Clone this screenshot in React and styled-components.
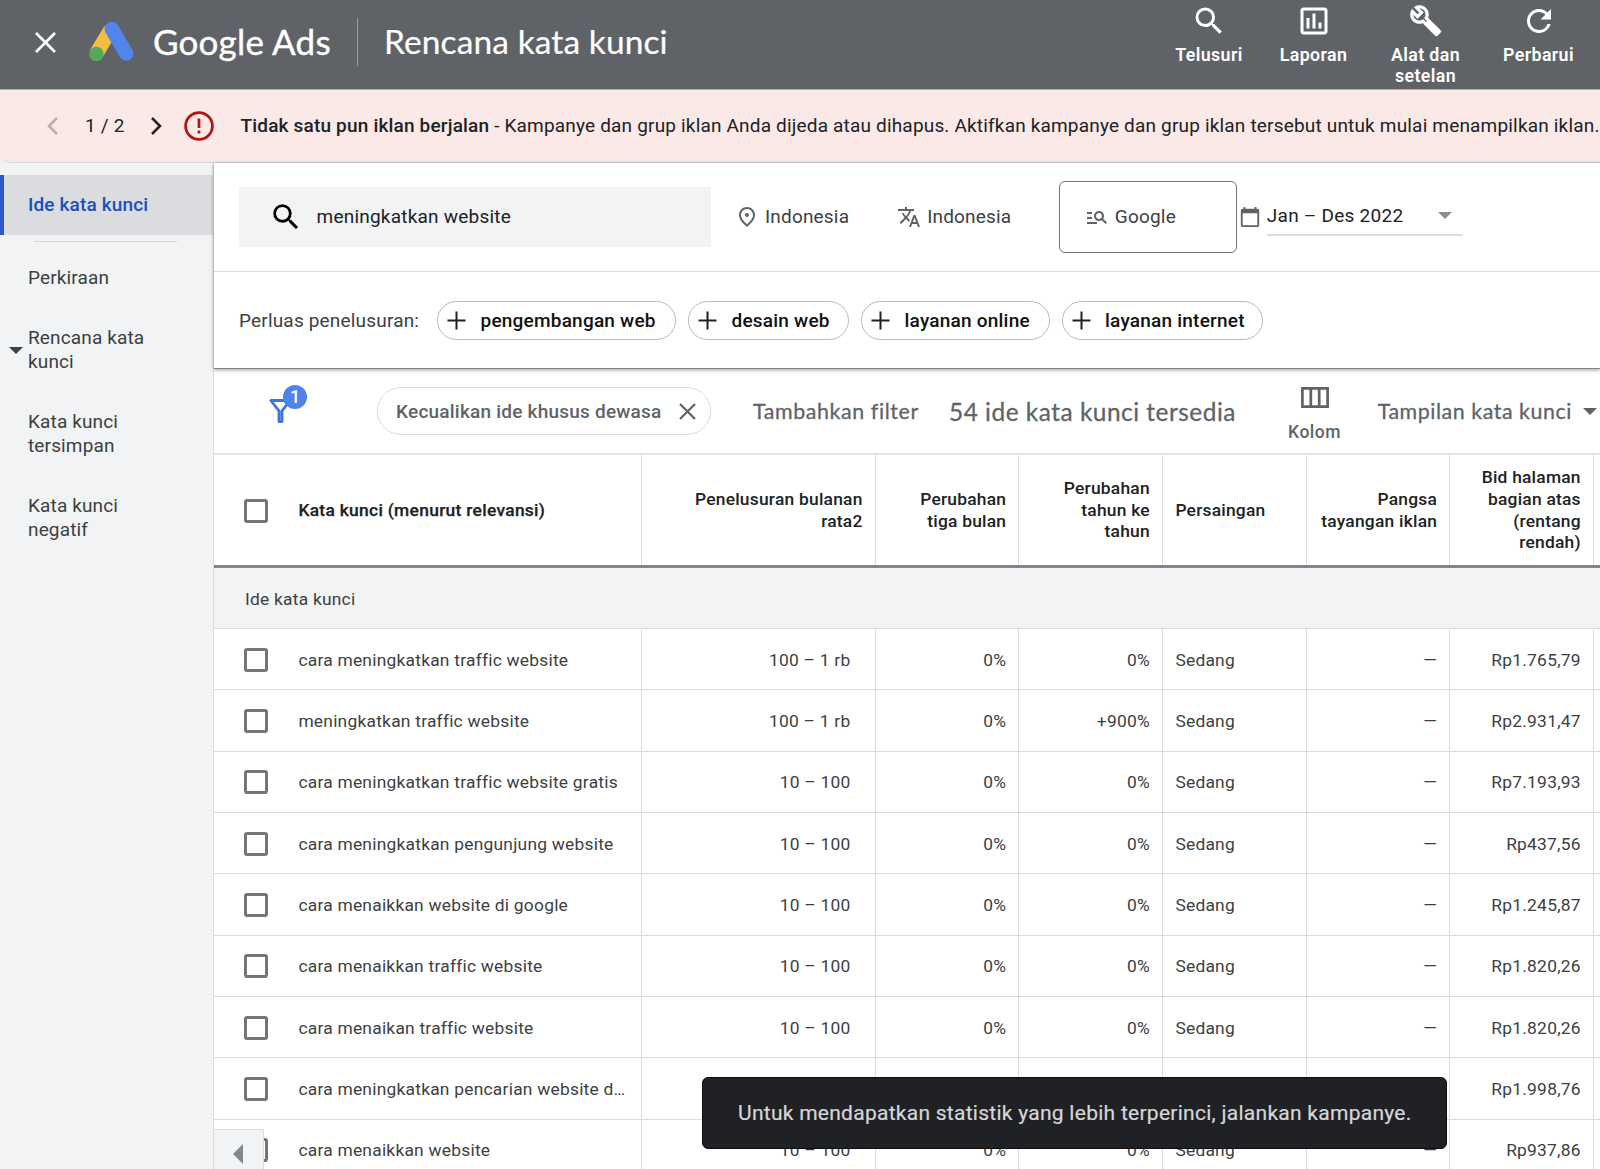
import React from "react";
import styled, { createGlobalStyle } from "styled-components";
import {
  MdSearch,
  MdOutlineInsertChart,
  MdRefresh,
  MdOutlinePlace,
  MdTranslate,
  MdManageSearch,
  MdCalendarToday,
} from "react-icons/md";

const GlobalStyle = createGlobalStyle`
  * { box-sizing: border-box; }
  body {
    margin: 0;
    overflow: hidden;
    background: #fff;
    color: #202124;
    font-family: Roboto, "Liberation Sans", sans-serif;
    font-size: 19px;
    letter-spacing: 0.18px;
  }
  svg { display: block; flex: none; }
`;

const brandFont = `Lato, Roboto, sans-serif`;

const Page = styled.div`
  width: 1600px;
  height: 1169px;
  overflow: hidden;
  display: flex;
  flex-direction: column;
  background: #f1f3f4;
`;

const TopBar = styled.header`
  height: 89px;
  flex: none;
  display: flex;
  justify-content: space-between;
  padding: 0 8px 0 35px;
  background: #5f6368;
  color: #fff;
`;

const Brand = styled.div`
  display: flex;
  align-items: center;
  height: 84px;
  font-family: ${brandFont};
  white-space: nowrap;
`;

const BrandName = styled.span`
  margin-left: 19px;
  padding-bottom: 3px;
  width: 185px;
  font-size: 35px;
  letter-spacing: 0.2px;
  -webkit-text-stroke: 0.4px #fff;
`;

const BrandRule = styled.span`
  width: 1px;
  height: 48px;
  margin: 0 26px 0 19px;
  background: #9aa0a6;
`;

const PageTitle = styled.span`
  padding-bottom: 3px;
  font-size: 33.5px;
  letter-spacing: 0.1px;
  -webkit-text-stroke: 0.2px #fff;
`;

const TopNav = styled.nav`
  display: flex;
`;

const NavItem = styled.a`
  width: ${(p) => p.$width}px;
  display: flex;
  flex-direction: column;
  align-items: center;
  padding-top: 2.5px;
  color: #fff;
  font-size: 17.8px;
  font-weight: 600;
  letter-spacing: 0.38px;
  line-height: 21px;
  text-align: center;
`;

const NavIcon = styled.span`
  height: 36px;
  margin-bottom: 5px;
  display: flex;
  align-items: center;
`;

const Banner = styled.div`
  height: 74px;
  flex: none;
  display: flex;
  align-items: center;
  padding-left: 47px;
  border-top: 1px solid #b9a9aa;
  border-bottom: 1px solid #d5d8df;
  border-bottom-left-radius: 10px;
  background: #fae9e7;
  white-space: nowrap;

  b { font-weight: 500; }
`;

const Pager = styled.span`
  width: 39px;
  margin: 0 26px 0 26px;
  padding-bottom: 2px;
`;

const BannerText = styled.span`
  margin-left: 27px;
  padding-bottom: 2px;
`;

const Body = styled.div`
  flex: 1;
  min-height: 0;
  display: flex;
`;

const Sidebar = styled.aside`
  width: 213px;
  flex: none;
  padding-top: 12px;
`;

const SideRule = styled.div`
  height: 1px;
  margin: 6px 36px 6px 34px;
  background: #d3d5d9;
`;

const SideItem = styled.a`
  display: flex;
  align-items: center;
  padding: 18px 20px 18px ${(p) => (p.$active ? 24 : 28)}px;
  line-height: 24px;
  border-left: ${(p) => (p.$active ? "4px solid #2a56c6" : "0")};
  background: ${(p) => (p.$active ? "#dadce0" : "transparent")};
  color: ${(p) => (p.$active ? "#1a50bd" : "#3c4043")};
  font-weight: ${(p) => (p.$active ? 500 : 400)};
  letter-spacing: 0.14px;
`;

const Triangle = styled.span`
  width: 0;
  height: 0;
  flex: none;
  border: 7px solid transparent;
  border-bottom-width: 0;
  border-top-color: ${(p) => p.$color};
`;

const SideTriangle = styled(Triangle)`
  margin: 0 5px 0 -19px;
`;

const Main = styled.main`
  flex: 1;
  min-width: 0;
  display: flex;
  flex-direction: column;
  border-left: 1px solid #dadce0;
  background: #fff;
`;

const SearchPanel = styled.section`
  height: 206px;
  flex: none;
  z-index: 1;
  background: #fff;
  border-bottom: 1px solid #85878a;
  box-shadow: 0 1px 4px rgba(0, 0, 0, 0.4);
`;

const SearchRow = styled.div`
  height: 109px;
  display: flex;
  align-items: center;
  padding: 0 0 1px 25px;
  border-bottom: 1px solid #dadce0;
  white-space: nowrap;
`;

const SearchField = styled.div`
  width: 472px;
  height: 60px;
  display: flex;
  align-items: center;
  gap: 13.5px;
  padding-left: 30px;
  background: #f1f3f4;
  letter-spacing: 0.22px;

  svg { color: #000; }
`;

const Targeting = styled.div`
  display: flex;
  align-items: center;
  gap: ${(p) => p.$gap}px;
  margin-left: ${(p) => p.$left}px;
  color: #3c4043;

  svg { color: #5f6368; }
`;

const NetworkBox = styled(Targeting)`
  width: 178px;
  height: 72px;
  padding-left: 25px;
  border: 1px solid #6f7479;
  border-radius: 6px;
`;

const DateRange = styled.div`
  width: 196px;
  height: 38px;
  display: flex;
  align-items: center;
  justify-content: space-between;
  padding-right: 11px;
  border-bottom: 2px solid #dcdde3;
  letter-spacing: 0.25px;
  color: #202124;
`;

const ExpandRow = styled.div`
  height: 96px;
  display: flex;
  align-items: center;
  gap: 12px;
  padding-left: 25px;
  white-space: nowrap;
`;

const ExpandLabel = styled.span`
  width: 186px;
  color: #3c4043;
`;

const ExpandChip = styled.button`
  height: 39px;
  width: ${(p) => p.$width}px;
  display: flex;
  align-items: center;
  gap: 14.5px;
  padding: 0 0 0 9px;
  border: 1px solid #b9bcc1;
  border-radius: 20px;
  background: #fff;
  color: #111;
  font: inherit;
  font-weight: 500;
  letter-spacing: 0.22px;
`;

const Toolbar = styled.div`
  height: 86px;
  flex: none;
  display: flex;
  align-items: center;
  padding: 0 3px 0 55px;
  border-bottom: 2px solid #e2e4e8;
  color: #5f6368;
  white-space: nowrap;
`;

const FilterButton = styled.span`
  position: relative;
  display: block;
  width: 22px;
  height: 24px;
`;

const Badge = styled.span`
  position: absolute;
  left: 14px;
  top: -14.5px;
  width: 24px;
  height: 24px;
  border-radius: 50%;
  background: #4f83ec;
  color: #fff;
  font-size: 18px;
  font-weight: 500;
  letter-spacing: 0;
  line-height: 24px;
  text-align: center;
`;

const FilterChip = styled.span`
  width: 334px;
  height: 48px;
  display: flex;
  align-items: center;
  justify-content: space-between;
  margin-left: 85.5px;
  padding: 0 13.5px 0 18.5px;
  border: 1px solid #dadce0;
  border-radius: 24px;
  font-weight: 500;
  letter-spacing: 0.22px;
`;

const ToolText = styled.span`
  width: ${(p) => p.$width}px;
  font-family: ${brandFont};
  font-size: ${(p) => p.$size}px;
  letter-spacing: ${(p) => p.$track}px;
  margin-left: ${(p) => p.$left}px;
  -webkit-text-stroke: 0.3px currentColor;
`;

const ColumnsButton = styled.span`
  display: flex;
  flex-direction: column;
  align-items: center;
  gap: 14px;
  margin-left: 52px;
  font-size: 17.5px;
  font-weight: 500;
  letter-spacing: 0.55px;
  line-height: 20px;
  padding-top: 6px;
`;

const Table = styled.div`
  flex: 1;
  min-height: 0;
  overflow: hidden;
  font-size: 17.4px;
  letter-spacing: 0.23px;
`;

const Row = styled.div`
  display: grid;
  grid-template-columns: 427.8px 233.8px repeat(5, 143.65px) 1fr;
  height: 61.35px;
  border-bottom: 1px solid #dadce0;
  color: #3c4043;
`;

const HeadRow = styled(Row)`
  height: 113px;
  border-bottom: 3px solid #80868b;
  color: #202124;
  font-weight: 500;
  line-height: 21.7px;
`;

const GroupRow = styled.div`
  height: 61px;
  display: flex;
  align-items: center;
  padding: 1px 0 0 31px;
  border-bottom: 1px solid #dadce0;
  background: #f1f3f4;
  color: #3c4043;
`;

const Cell = styled.div`
  display: flex;
  align-items: center;
  justify-content: ${(p) => (p.$left ? "flex-start" : "flex-end")};
  padding: 1px ${(p) => (p.$wide ? 24.2 : 12)}px 0 12.5px;
  border-right: 1px solid #dadce0;
  text-align: ${(p) => (p.$left ? "left" : "right")};
  white-space: pre;
`;

const KeywordCell = styled(Cell)`
  justify-content: flex-start;
  gap: 30px;
  padding-left: 30.4px;
  text-align: left;
`;

const Checkbox = styled.span`
  width: 24px;
  height: 24px;
  flex: none;
  border: 3px solid #757575;
  border-radius: 3px;
  background: #fff;
`;

const HeadKeyword = styled.span`
  letter-spacing: 0.3px;
  -webkit-text-stroke: 0.25px #202124;
`;

const ScrollBack = styled.button`
  position: absolute;
  left: 214px;
  top: 1129px;
  width: 50px;
  height: 40px;
  display: flex;
  align-items: flex-start;
  padding: 14px 0 0 19px;
  border: solid #dadce0;
  border-width: 1px 1px 0 0;
  background: #f1f3f4;
`;

const Toast = styled.div`
  position: absolute;
  left: 702px;
  top: 1077px;
  width: 745px;
  height: 72px;
  display: flex;
  align-items: center;
  padding: 0 0 0 35px;
  border: 1px solid #0c0d0f;
  border-radius: 6px;
  background: #202124;
  color: #d5d6d8;
  font-size: 21px;
  letter-spacing: 0.27px;
  white-space: nowrap;
  -webkit-text-stroke: 0.2px currentColor;
`;

const LogoSvg = styled.svg`
  margin-left: 32px;
`;

const AdsLogo = () => (
  <LogoSvg width="46" height="42" viewBox="0 0 46 42">
    <path d="M22.5 9 L8 33" stroke="#f4be42" strokeWidth="14.5" />
    <path d="M23.8 8 L38.2 32.6" stroke="#5285ec" strokeWidth="14.4" strokeLinecap="round" />
    <circle cx="8.4" cy="33" r="7.3" fill="#58a55c" />
  </LogoSvg>
);

const Cross = ({ size, weight }) => (
  <svg width={size} height={size} viewBox={`0 0 ${size} ${size}`}>
    <path
      d={`M1 1 L${size - 1} ${size - 1} M${size - 1} 1 L1 ${size - 1}`}
      stroke="currentColor"
      strokeWidth={weight}
    />
  </svg>
);

const Chevron = ({ back, color }) => (
  <svg width="12" height="18" viewBox="0 0 12 18">
    <path d={back ? "M10 1 L2 9 L10 17" : "M2 1 L10 9 L2 17"} fill="none" stroke={color} strokeWidth="2.5" />
  </svg>
);

const ErrorSvg = styled.svg`
  margin-left: 21.5px;
`;

const ErrorIcon = () => (
  <ErrorSvg width="30" height="30" viewBox="0 0 30 30">
    <circle cx="15" cy="15" r="13.4" fill="none" stroke="#b3140f" strokeWidth="2.7" />
    <path d="M15 7.5 V17 M15 19.6 V22.4" stroke="#b3140f" strokeWidth="2.7" />
  </ErrorSvg>
);

const Wrench = () => (
  <svg width="33.5" height="33.5" viewBox="0 0 24 24" fill="#fff" stroke="#fff" strokeWidth=".35">
    <path d="M22.61 18.99l-9.08-9.08c.93-2.34.45-5.1-1.44-7C9.79.61 6.21.4 3.66 2.26L7.5 6.11 6.08 7.52 2.25 3.69C.39 6.23.6 9.82 2.9 12.11c1.86 1.86 4.57 2.35 6.89 1.48l9.11 9.11c.39.39 1.02.39 1.41 0l2.3-2.3c.4-.38.4-1.01 0-1.41zm-3 1.6l-9.46-9.46c-.61.45-1.29.72-2 .82-1.36.2-2.79-.21-3.83-1.25C3.37 9.76 2.93 8.5 3 7.26l3.09 3.09 4.24-4.24-3.09-3.09c1.24-.07 2.49.37 3.44 1.31 1.08 1.08 1.49 2.57 1.24 3.96-.12.71-.42 1.37-.88 1.96l9.45 9.45-.88.89z" />
    <path d="M12.6 12.6 L20.4 20.4" strokeWidth="2.4" />
  </svg>
);

const Plus = () => (
  <svg width="19" height="19" viewBox="0 0 19 19">
    <path d="M9.5 .5 V18.5 M.5 9.5 H18.5" stroke="#202124" strokeWidth="2" />
  </svg>
);

const Funnel = () => (
  <svg width="23" height="24" viewBox="0 0 23 24">
    <path d="M1.8 1.5 H21 L13 11.8 V22.5 H10 V11.8 Z" fill="none" stroke="#3f73e3" strokeWidth="2.8" strokeLinejoin="round" />
  </svg>
);

const ColumnsIcon = () => (
  <svg width="28" height="21" viewBox="0 0 28 21">
    <path d="M1.4 1.4 H26.6 V19.6 H1.4 Z M9.8 1.4 V19.6 M18.2 1.4 V19.6" fill="none" stroke="#5f6368" strokeWidth="2.7" />
  </svg>
);

const columns = [
  ["Penelusuran bulanan\nrata2"],
  ["Perubahan\ntiga bulan"],
  ["Perubahan\ntahun ke\ntahun"],
  ["Persaingan", true],
  ["Pangsa\ntayangan iklan"],
  ["Bid halaman\nbagian atas\n(rentang\nrendah)"],
];

const keywords = [
  ["cara meningkatkan traffic website", "100 – 1 rb", "0%", "Rp1.765,79"],
  ["meningkatkan traffic website", "100 – 1 rb", "+900%", "Rp2.931,47"],
  ["cara meningkatkan traffic website gratis", "10 – 100", "0%", "Rp7.193,93"],
  ["cara meningkatkan pengunjung website", "10 – 100", "0%", "Rp437,56"],
  ["cara menaikkan website di google", "10 – 100", "0%", "Rp1.245,87"],
  ["cara menaikkan traffic website", "10 – 100", "0%", "Rp1.820,26"],
  ["cara menaikan traffic website", "10 – 100", "0%", "Rp1.820,26"],
  ["cara meningkatkan pencarian website d…", "10 – 100", "0%", "Rp1.998,76"],
  ["cara menaikkan website", "10 – 100", "0%", "Rp937,86"],
];

const suggestions = [
  ["pengembangan web", 239],
  ["desain web", 161],
  ["layanan online", 188.5],
  ["layanan internet", 201.5],
];

export default function App() {
  return (
    <>
      <GlobalStyle />
      <Page>
        <TopBar>
          <Brand>
            <Cross size={21} weight={2.7} />
            <AdsLogo />
            <BrandName>Google Ads</BrandName>
            <BrandRule />
            <PageTitle>Rencana kata kunci</PageTitle>
          </Brand>
          <TopNav>
            <NavItem $width={104}><NavIcon><MdSearch size={36} /></NavIcon>Telusuri</NavItem>
            <NavItem $width={105}><NavIcon><MdOutlineInsertChart size={36} /></NavIcon>Laporan</NavItem>
            <NavItem $width={119}><NavIcon><Wrench /></NavIcon>Alat dan<br />setelan</NavItem>
            <NavItem $width={107}><NavIcon><MdRefresh size={36} /></NavIcon>Perbarui</NavItem>
          </TopNav>
        </TopBar>

        <Banner>
          <Chevron back color="#b8aead" />
          <Pager>1 / 2</Pager>
          <Chevron color="#202124" />
          <ErrorIcon />
          <BannerText>
            <b>Tidak satu pun iklan berjalan</b> - Kampanye dan grup iklan Anda dijeda atau dihapus. Aktifkan
            kampanye dan grup iklan tersebut untuk mulai menampilkan iklan.
          </BannerText>
        </Banner>

        <Body>
          <Sidebar>
            <SideItem $active>Ide kata kunci</SideItem>
            <SideRule />
            <SideItem>Perkiraan</SideItem>
            <SideItem>
              <SideTriangle $color="#3c4043" />
              <span>Rencana kata<br />kunci</span>
            </SideItem>
            <SideItem>Kata kunci<br />tersimpan</SideItem>
            <SideItem>Kata kunci<br />negatif</SideItem>
          </Sidebar>

          <Main>
            <SearchPanel>
              <SearchRow>
                <SearchField><MdSearch size={34} />meningkatkan website</SearchField>
                <Targeting $left={24} $gap={6}><MdOutlinePlace size={24} />Indonesia</Targeting>
                <Targeting $left={48} $gap={6}><MdTranslate size={24} />Indonesia</Targeting>
                <NetworkBox $left={47.5} $gap={6}><MdManageSearch size={24} />Google</NetworkBox>
                <Targeting $left={2} $gap={6}>
                  <MdCalendarToday size={22} />
                  <DateRange>Jan – Des 2022<Triangle $color="#8b8e92" /></DateRange>
                </Targeting>
              </SearchRow>
              <ExpandRow>
                <ExpandLabel>Perluas penelusuran:</ExpandLabel>
                {suggestions.map(([text, width]) => (
                  <ExpandChip key={text} $width={width}><Plus />{text}</ExpandChip>
                ))}
              </ExpandRow>
            </SearchPanel>

            <Toolbar>
              <FilterButton><Funnel /><Badge>1</Badge></FilterButton>
              <FilterChip>Kecualikan ide khusus dewasa<Cross size={17} weight={2.2} /></FilterChip>
              <ToolText $left={42.5} $width={166} $size={21.4} $track={0.6}>Tambahkan filter</ToolText>
              <ToolText $left={30} $width={287} $size={24.4} $track={0.52}>54 ide kata kunci tersedia</ToolText>
              <ColumnsButton><ColumnsIcon />Kolom</ColumnsButton>
              <ToolText $left={36.5} $width={205} $size={21.4} $track={0.55}>Tampilan kata kunci</ToolText>
              <Triangle $color="#5f6368" />
            </Toolbar>

            <Table>
              <HeadRow>
                <KeywordCell><Checkbox /><HeadKeyword>Kata kunci (menurut relevansi)</HeadKeyword></KeywordCell>
                {columns.map(([label, left]) => <Cell key={label} $left={left}>{label}</Cell>)}
              </HeadRow>
              <GroupRow>Ide kata kunci</GroupRow>
              {keywords.map(([name, volume, yearly, bid]) => (
                <Row key={name}>
                  <KeywordCell><Checkbox />{name}</KeywordCell>
                  <Cell $wide>{volume}</Cell>
                  <Cell>0%</Cell>
                  <Cell>{yearly}</Cell>
                  <Cell $left>Sedang</Cell>
                  <Cell>—</Cell>
                  <Cell>{bid}</Cell>
                </Row>
              ))}
            </Table>
          </Main>
        </Body>
      </Page>
      <ScrollBack>
        <svg width="10" height="20" viewBox="0 0 10 20"><path d="M10 0 V20 L0 10 Z" fill="#80868b" /></svg>
      </ScrollBack>
      <Toast>Untuk mendapatkan statistik yang lebih terperinci, jalankan kampanye.</Toast>
    </>
  );
}
